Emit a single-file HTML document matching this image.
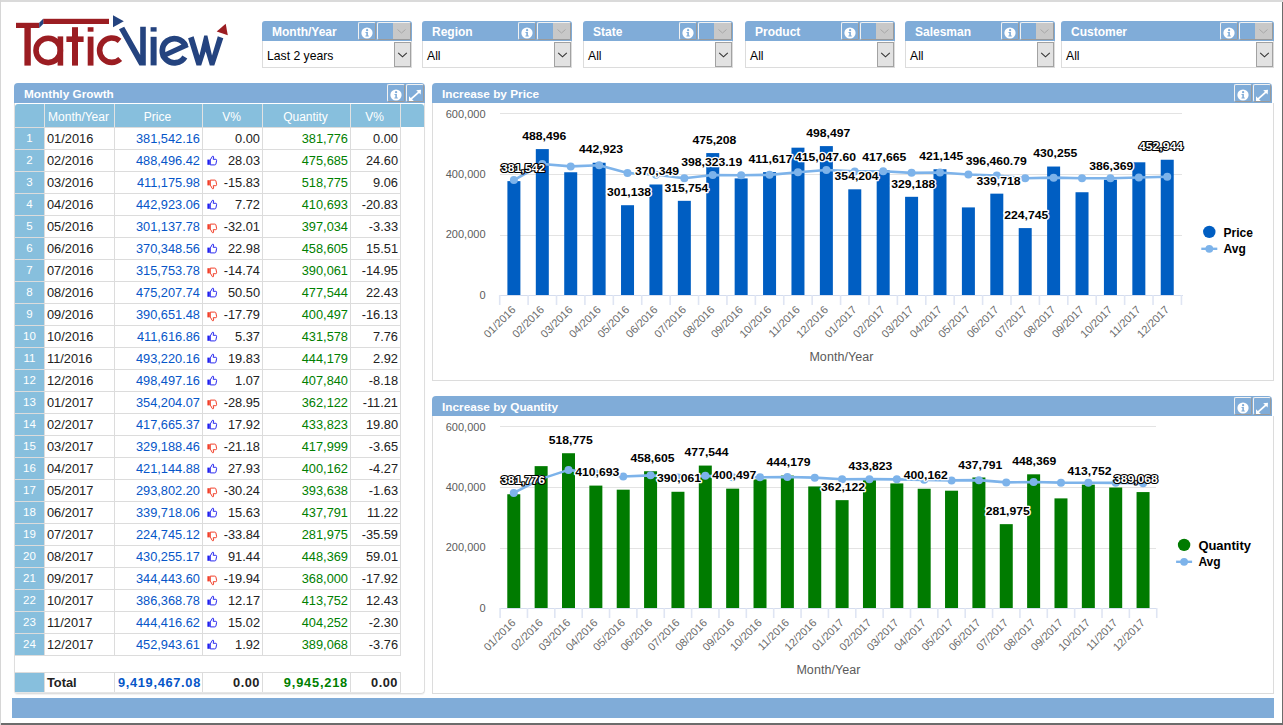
<!DOCTYPE html><html><head><meta charset="utf-8"><style>
*{box-sizing:border-box}
html,body{margin:0;padding:0}
body{width:1283px;height:725px;overflow:hidden;position:relative;background:#fff;font-family:"Liberation Sans", sans-serif;}
.abs{position:absolute}
.frame{position:absolute;left:0;top:0;width:1283px;height:725px;border-top:2px solid #dadada;border-left:1px solid #dadada;border-right:1px solid #6f6f6f;border-bottom:2px solid #6f6f6f;pointer-events:none;z-index:50}
.flt{position:absolute;top:21px;height:47px}
.flt .h{position:absolute;left:0;top:0;right:0;height:20px;background:#80acd8;border-radius:3px 3px 0 0}
.flt .h span{position:absolute;left:10px;top:4px;font-size:12px;font-weight:bold;color:#fff;line-height:14px}
.flt .b{position:absolute;left:0;top:20px;right:0;height:27px;background:#fff;border:1px solid #dcdcdc;border-top:none}
.flt .b span{position:absolute;left:4px;top:8px;font-size:12.2px;color:#000;line-height:15px}
.ddb{position:absolute;width:17px;height:25px;right:0px;top:1px;background:#e1e1e1;border:1px solid #a0a0a0}
.ibtn{position:absolute;width:18px;height:18px;border:1px solid #f2f2f2;border-right-color:#9a9a9a;border-bottom-color:#9a9a9a;border-radius:2px;background:#80acd8}
.pnl{position:absolute;background:#fff}
.ph{position:absolute;left:0;top:0;right:0;height:20px;background:#80acd8;border-radius:4px 4px 0 0}
.ph span{position:absolute;left:10px;top:4px;font-size:11.8px;font-weight:bold;color:#fff;line-height:14px}
</style></head><body>
<div class="abs" style="left:0;top:0;width:1283px;height:2px;background:#dadada;z-index:50"></div><div class="abs" style="left:0;top:0;width:1px;height:725px;background:#d6d6d6;z-index:50"></div><div class="abs" style="left:1282px;top:2px;width:1px;height:723px;background:#6c6c6c;z-index:50"></div><div class="abs" style="left:1px;top:723px;width:1282px;height:2px;background:#6c6c6c;z-index:50"></div>
<svg class="abs" style="left:0;top:0" width="240" height="80" viewBox="0 0 240 80">
<g fill="#9b1d22">
<rect x="16" y="22.8" width="23.2" height="5.2"/>
<rect x="43.2" y="18.8" width="65.8" height="5.2"/>
<rect x="24.4" y="27" width="6.4" height="38.6"/>
<rect x="57.6" y="36.4" width="5.6" height="29.2"/>
<rect x="72" y="27.2" width="6" height="38.4"/>
<rect x="66.4" y="36.4" width="17.2" height="5.6"/>
<rect x="87.7" y="27.2" width="5.8" height="4.5"/>
<rect x="87.7" y="36.6" width="5.8" height="29"/>
</g>
<circle cx="48.2" cy="50.4" r="12.2" fill="none" stroke="#9b1d22" stroke-width="5.6"/>
<path d="M119.6 40.8 A12.2 12.2 0 1 0 120.2 59" fill="none" stroke="#9b1d22" stroke-width="5.6"/>
<path d="M39.2 22.8 L43.2 18.8 L43.2 24 L39.2 28 Z" fill="#24437f"/>
<path d="M113 15.2 L123.8 21.2 L113 27.2 Z" fill="#24437f"/>
<path d="M216.7 31.4 L225.7 23.8 L227.8 35.2 Z" fill="#9b1d22"/>
<g fill="#24437f">
<path d="M119 29.2 L124.2 26.8 L140.2 55 L140.2 26.8 L145.8 26.8 L145.8 65.4 L139.4 65.4 Z"/>
<rect x="150.6" y="27.2" width="6" height="4.4"/>
<rect x="150.6" y="36.8" width="6" height="28.6"/>
<path d="M188.1 38.3 L193.6 36.3 L199.4 55.5 L204.2 35.5 L207.4 35.5 L212 55.5 L217.8 36.3 L223.3 38.3 L214.3 65.5 L209.8 65.5 L205.7 51.5 L201.2 65.5 L196.5 65.5 Z"/>
</g>
<path d="M185.4 45.7 A12.1 12.1 0 1 0 184.8 56.9" fill="none" stroke="#24437f" stroke-width="5.8"/>
<path d="M165 55 L187.6 44.6" fill="none" stroke="#24437f" stroke-width="5.2"/>
</svg>
<div class="flt" style="left:262px;width:150px"><div class="h"><span>Month/Year</span></div><div class="b"><span>Last 2 years</span></div></div><div class="ibtn" style="left:358px;top:22px"></div><svg class="abs" style="left:359.5px;top:26.3px" width="14" height="14" viewBox="0 0 14 14"><circle cx="7" cy="7" r="5.6" fill="#fff"/><circle cx="7.1" cy="4.2" r="1.15" fill="#80acd8"/><path d="M5.5 6.1 H7.9 V9.6 H8.8 V10.6 H5.4 V9.6 H6.3 V7.1 H5.5 Z" fill="#80acd8"/></svg><div class="abs" style="left:377px;top:22px;width:34px;height:18px;border:1px solid #f2f2f2;border-right-color:#9a9a9a;border-bottom-color:#9a9a9a;border-radius:2px;background:#80acd8"></div><div class="abs" style="left:393px;top:23px;width:17px;height:16px;background:#c8c8c8"></div><svg class="abs" style="left:393px;top:23px" width="17" height="16"><path d="M4.5 6.5 L8.5 10 L12.5 6.5" fill="none" stroke="#a8a8a8" stroke-width="1"/></svg><div class="abs" style="left:394px;top:42px;width:17px;height:25px;background:#e2e2e2;border:1px solid #a2a2a2"></div><svg class="abs" style="left:394px;top:42px" width="17" height="25"><path d="M4.2 10.8 L8.5 14.8 L12.8 10.8" fill="none" stroke="#333" stroke-width="1.1"/></svg><div class="flt" style="left:422px;width:150px"><div class="h"><span>Region</span></div><div class="b"><span>All</span></div></div><div class="ibtn" style="left:518px;top:22px"></div><svg class="abs" style="left:519.5px;top:26.3px" width="14" height="14" viewBox="0 0 14 14"><circle cx="7" cy="7" r="5.6" fill="#fff"/><circle cx="7.1" cy="4.2" r="1.15" fill="#80acd8"/><path d="M5.5 6.1 H7.9 V9.6 H8.8 V10.6 H5.4 V9.6 H6.3 V7.1 H5.5 Z" fill="#80acd8"/></svg><div class="abs" style="left:537px;top:22px;width:34px;height:18px;border:1px solid #f2f2f2;border-right-color:#9a9a9a;border-bottom-color:#9a9a9a;border-radius:2px;background:#80acd8"></div><div class="abs" style="left:553px;top:23px;width:17px;height:16px;background:#c8c8c8"></div><svg class="abs" style="left:553px;top:23px" width="17" height="16"><path d="M4.5 6.5 L8.5 10 L12.5 6.5" fill="none" stroke="#a8a8a8" stroke-width="1"/></svg><div class="abs" style="left:554px;top:42px;width:17px;height:25px;background:#e2e2e2;border:1px solid #a2a2a2"></div><svg class="abs" style="left:554px;top:42px" width="17" height="25"><path d="M4.2 10.8 L8.5 14.8 L12.8 10.8" fill="none" stroke="#333" stroke-width="1.1"/></svg><div class="flt" style="left:583px;width:150px"><div class="h"><span>State</span></div><div class="b"><span>All</span></div></div><div class="ibtn" style="left:679px;top:22px"></div><svg class="abs" style="left:680.5px;top:26.3px" width="14" height="14" viewBox="0 0 14 14"><circle cx="7" cy="7" r="5.6" fill="#fff"/><circle cx="7.1" cy="4.2" r="1.15" fill="#80acd8"/><path d="M5.5 6.1 H7.9 V9.6 H8.8 V10.6 H5.4 V9.6 H6.3 V7.1 H5.5 Z" fill="#80acd8"/></svg><div class="abs" style="left:698px;top:22px;width:34px;height:18px;border:1px solid #f2f2f2;border-right-color:#9a9a9a;border-bottom-color:#9a9a9a;border-radius:2px;background:#80acd8"></div><div class="abs" style="left:714px;top:23px;width:17px;height:16px;background:#c8c8c8"></div><svg class="abs" style="left:714px;top:23px" width="17" height="16"><path d="M4.5 6.5 L8.5 10 L12.5 6.5" fill="none" stroke="#a8a8a8" stroke-width="1"/></svg><div class="abs" style="left:715px;top:42px;width:17px;height:25px;background:#e2e2e2;border:1px solid #a2a2a2"></div><svg class="abs" style="left:715px;top:42px" width="17" height="25"><path d="M4.2 10.8 L8.5 14.8 L12.8 10.8" fill="none" stroke="#333" stroke-width="1.1"/></svg><div class="flt" style="left:745px;width:150px"><div class="h"><span>Product</span></div><div class="b"><span>All</span></div></div><div class="ibtn" style="left:841px;top:22px"></div><svg class="abs" style="left:842.5px;top:26.3px" width="14" height="14" viewBox="0 0 14 14"><circle cx="7" cy="7" r="5.6" fill="#fff"/><circle cx="7.1" cy="4.2" r="1.15" fill="#80acd8"/><path d="M5.5 6.1 H7.9 V9.6 H8.8 V10.6 H5.4 V9.6 H6.3 V7.1 H5.5 Z" fill="#80acd8"/></svg><div class="abs" style="left:860px;top:22px;width:34px;height:18px;border:1px solid #f2f2f2;border-right-color:#9a9a9a;border-bottom-color:#9a9a9a;border-radius:2px;background:#80acd8"></div><div class="abs" style="left:876px;top:23px;width:17px;height:16px;background:#c8c8c8"></div><svg class="abs" style="left:876px;top:23px" width="17" height="16"><path d="M4.5 6.5 L8.5 10 L12.5 6.5" fill="none" stroke="#a8a8a8" stroke-width="1"/></svg><div class="abs" style="left:877px;top:42px;width:17px;height:25px;background:#e2e2e2;border:1px solid #a2a2a2"></div><svg class="abs" style="left:877px;top:42px" width="17" height="25"><path d="M4.2 10.8 L8.5 14.8 L12.8 10.8" fill="none" stroke="#333" stroke-width="1.1"/></svg><div class="flt" style="left:905px;width:150px"><div class="h"><span>Salesman</span></div><div class="b"><span>All</span></div></div><div class="ibtn" style="left:1001px;top:22px"></div><svg class="abs" style="left:1002.5px;top:26.3px" width="14" height="14" viewBox="0 0 14 14"><circle cx="7" cy="7" r="5.6" fill="#fff"/><circle cx="7.1" cy="4.2" r="1.15" fill="#80acd8"/><path d="M5.5 6.1 H7.9 V9.6 H8.8 V10.6 H5.4 V9.6 H6.3 V7.1 H5.5 Z" fill="#80acd8"/></svg><div class="abs" style="left:1020px;top:22px;width:34px;height:18px;border:1px solid #f2f2f2;border-right-color:#9a9a9a;border-bottom-color:#9a9a9a;border-radius:2px;background:#80acd8"></div><div class="abs" style="left:1036px;top:23px;width:17px;height:16px;background:#c8c8c8"></div><svg class="abs" style="left:1036px;top:23px" width="17" height="16"><path d="M4.5 6.5 L8.5 10 L12.5 6.5" fill="none" stroke="#a8a8a8" stroke-width="1"/></svg><div class="abs" style="left:1037px;top:42px;width:17px;height:25px;background:#e2e2e2;border:1px solid #a2a2a2"></div><svg class="abs" style="left:1037px;top:42px" width="17" height="25"><path d="M4.2 10.8 L8.5 14.8 L12.8 10.8" fill="none" stroke="#333" stroke-width="1.1"/></svg><div class="flt" style="left:1061px;width:213px"><div class="h"><span>Customer</span></div><div class="b"><span>All</span></div></div><div class="ibtn" style="left:1220px;top:22px"></div><svg class="abs" style="left:1221.5px;top:26.3px" width="14" height="14" viewBox="0 0 14 14"><circle cx="7" cy="7" r="5.6" fill="#fff"/><circle cx="7.1" cy="4.2" r="1.15" fill="#80acd8"/><path d="M5.5 6.1 H7.9 V9.6 H8.8 V10.6 H5.4 V9.6 H6.3 V7.1 H5.5 Z" fill="#80acd8"/></svg><div class="abs" style="left:1239px;top:22px;width:34px;height:18px;border:1px solid #f2f2f2;border-right-color:#9a9a9a;border-bottom-color:#9a9a9a;border-radius:2px;background:#80acd8"></div><div class="abs" style="left:1255px;top:23px;width:17px;height:16px;background:#c8c8c8"></div><svg class="abs" style="left:1255px;top:23px" width="17" height="16"><path d="M4.5 6.5 L8.5 10 L12.5 6.5" fill="none" stroke="#a8a8a8" stroke-width="1"/></svg><div class="abs" style="left:1256px;top:42px;width:17px;height:25px;background:#e2e2e2;border:1px solid #a2a2a2"></div><svg class="abs" style="left:1256px;top:42px" width="17" height="25"><path d="M4.2 10.8 L8.5 14.8 L12.8 10.8" fill="none" stroke="#333" stroke-width="1.1"/></svg><div class="abs" style="left:14px;top:103px;width:411px;height:591px;border:1px solid #dedede;border-top:none;border-radius:0 0 4px 4px;box-shadow:0 1px 1px rgba(0,0,0,0.06)"></div><div class="ph abs" style="left:14px;top:83px;width:411px;right:auto"><span>Monthly Growth</span></div><div class="ibtn" style="left:387px;top:84px"></div><svg class="abs" style="left:388.6px;top:88.4px" width="14" height="14" viewBox="0 0 14 14"><circle cx="7" cy="7" r="5.6" fill="#fff"/><circle cx="7.1" cy="4.2" r="1.15" fill="#80acd8"/><path d="M5.5 6.1 H7.9 V9.6 H8.8 V10.6 H5.4 V9.6 H6.3 V7.1 H5.5 Z" fill="#80acd8"/></svg><div class="ibtn" style="left:406px;top:84px"></div><svg class="abs" style="left:406px;top:84px" width="18" height="18" viewBox="0 0 18 18"><path d="M4.6 15.4 L13.4 7.6" stroke="#fff" stroke-width="1.8"/><path d="M10.2 6.2 L15 5.8 L14.6 10.6 Z" fill="#fff"/><path d="M3 12.2 L3 17 L7.8 17 Z" fill="#fff"/></svg><div class="abs" style="left:15px;top:104px;width:409px;height:23px;background:#87bfdd;border-radius:3px 3px 0 0"></div><div class="abs" style="left:15px;top:127px;width:30px;height:528px;background:#87bfdd"></div><div class="abs" style="left:15px;top:673px;width:30px;height:19px;background:#87bfdd"></div><div class="abs" style="left:44px;top:104px;width:1px;height:551px;background:#dcdcdc"></div><div class="abs" style="left:44px;top:672px;width:1px;height:20px;background:#dcdcdc"></div><div class="abs" style="left:114px;top:104px;width:1px;height:551px;background:#dcdcdc"></div><div class="abs" style="left:114px;top:672px;width:1px;height:20px;background:#dcdcdc"></div><div class="abs" style="left:202px;top:104px;width:1px;height:551px;background:#dcdcdc"></div><div class="abs" style="left:202px;top:672px;width:1px;height:20px;background:#dcdcdc"></div><div class="abs" style="left:262px;top:104px;width:1px;height:551px;background:#dcdcdc"></div><div class="abs" style="left:262px;top:672px;width:1px;height:20px;background:#dcdcdc"></div><div class="abs" style="left:350px;top:104px;width:1px;height:551px;background:#dcdcdc"></div><div class="abs" style="left:350px;top:672px;width:1px;height:20px;background:#dcdcdc"></div><div class="abs" style="left:400px;top:104px;width:1px;height:551px;background:#dcdcdc"></div><div class="abs" style="left:400px;top:672px;width:1px;height:20px;background:#dcdcdc"></div><div class="abs" style="left:44px;top:104px;width:1px;height:23px;background:#e2e2e2"></div><div class="abs" style="left:114px;top:104px;width:1px;height:23px;background:#e2e2e2"></div><div class="abs" style="left:202px;top:104px;width:1px;height:23px;background:#e2e2e2"></div><div class="abs" style="left:262px;top:104px;width:1px;height:23px;background:#e2e2e2"></div><div class="abs" style="left:350px;top:104px;width:1px;height:23px;background:#e2e2e2"></div><div class="abs" style="left:400px;top:104px;width:1px;height:23px;background:#e2e2e2"></div><div class="abs" style="left:15px;top:127px;width:386px;height:1px;background:#dcdcdc"></div><div class="abs" style="left:15px;top:149px;width:386px;height:1px;background:#dcdcdc"></div><div class="abs" style="left:15px;top:171px;width:386px;height:1px;background:#dcdcdc"></div><div class="abs" style="left:15px;top:193px;width:386px;height:1px;background:#dcdcdc"></div><div class="abs" style="left:15px;top:215px;width:386px;height:1px;background:#dcdcdc"></div><div class="abs" style="left:15px;top:237px;width:386px;height:1px;background:#dcdcdc"></div><div class="abs" style="left:15px;top:259px;width:386px;height:1px;background:#dcdcdc"></div><div class="abs" style="left:15px;top:281px;width:386px;height:1px;background:#dcdcdc"></div><div class="abs" style="left:15px;top:303px;width:386px;height:1px;background:#dcdcdc"></div><div class="abs" style="left:15px;top:325px;width:386px;height:1px;background:#dcdcdc"></div><div class="abs" style="left:15px;top:347px;width:386px;height:1px;background:#dcdcdc"></div><div class="abs" style="left:15px;top:369px;width:386px;height:1px;background:#dcdcdc"></div><div class="abs" style="left:15px;top:391px;width:386px;height:1px;background:#dcdcdc"></div><div class="abs" style="left:15px;top:413px;width:386px;height:1px;background:#dcdcdc"></div><div class="abs" style="left:15px;top:435px;width:386px;height:1px;background:#dcdcdc"></div><div class="abs" style="left:15px;top:457px;width:386px;height:1px;background:#dcdcdc"></div><div class="abs" style="left:15px;top:479px;width:386px;height:1px;background:#dcdcdc"></div><div class="abs" style="left:15px;top:501px;width:386px;height:1px;background:#dcdcdc"></div><div class="abs" style="left:15px;top:523px;width:386px;height:1px;background:#dcdcdc"></div><div class="abs" style="left:15px;top:545px;width:386px;height:1px;background:#dcdcdc"></div><div class="abs" style="left:15px;top:567px;width:386px;height:1px;background:#dcdcdc"></div><div class="abs" style="left:15px;top:589px;width:386px;height:1px;background:#dcdcdc"></div><div class="abs" style="left:15px;top:611px;width:386px;height:1px;background:#dcdcdc"></div><div class="abs" style="left:15px;top:633px;width:386px;height:1px;background:#dcdcdc"></div><div class="abs" style="left:15px;top:655px;width:386px;height:1px;background:#dcdcdc"></div><div class="abs" style="left:15px;top:672px;width:386px;height:1px;background:#dcdcdc"></div><div class="abs" style="left:15px;top:692px;width:386px;height:1px;background:#e6e6e6"></div><div class="abs" style="left:44px;top:104.6px;width:69px;height:23px;line-height:25px;text-align:center;color:#fff;font-size:12px">Month/Year</div><div class="abs" style="left:114px;top:104.6px;width:87px;height:23px;line-height:25px;text-align:center;color:#fff;font-size:12px">Price</div><div class="abs" style="left:202px;top:104.6px;width:59px;height:23px;line-height:25px;text-align:center;color:#fff;font-size:12px">V%</div><div class="abs" style="left:262px;top:104.6px;width:87px;height:23px;line-height:25px;text-align:center;color:#fff;font-size:12px">Quantity</div><div class="abs" style="left:350px;top:104.6px;width:49px;height:23px;line-height:25px;text-align:center;color:#fff;font-size:12px">V%</div><div style="position:absolute;top:127px;height:21px;line-height:23px;font-size:12.8px;white-space:nowrap;left:15px;width:29px;text-align:center;color:#fff;font-size:11.5px">1</div><div style="position:absolute;top:127px;height:21px;line-height:23px;font-size:12.8px;white-space:nowrap;left:47px;color:#222">01/2016</div><div style="position:absolute;top:127px;height:21px;line-height:23px;font-size:12.8px;white-space:nowrap;right:1083px;color:#0656c8;text-align:right">381,542.16</div><div style="position:absolute;top:127px;height:21px;line-height:23px;font-size:12.8px;white-space:nowrap;right:1023px;color:#222;text-align:right">0.00</div><div style="position:absolute;top:127px;height:21px;line-height:23px;font-size:12.8px;white-space:nowrap;right:935px;color:#008000;text-align:right">381,776</div><div style="position:absolute;top:127px;height:21px;line-height:23px;font-size:12.8px;white-space:nowrap;right:885px;color:#222;text-align:right">0.00</div><div style="position:absolute;top:149px;height:21px;line-height:23px;font-size:12.8px;white-space:nowrap;left:15px;width:29px;text-align:center;color:#fff;font-size:11.5px">2</div><div style="position:absolute;top:149px;height:21px;line-height:23px;font-size:12.8px;white-space:nowrap;left:47px;color:#222">02/2016</div><div style="position:absolute;top:149px;height:21px;line-height:23px;font-size:12.8px;white-space:nowrap;right:1083px;color:#0656c8;text-align:right">488,496.42</div><div style="position:absolute;top:149px;height:21px;line-height:23px;font-size:12.8px;white-space:nowrap;right:1023px;color:#222;text-align:right">28.03</div><div style="position:absolute;top:149px;height:21px;line-height:23px;font-size:12.8px;white-space:nowrap;right:935px;color:#008000;text-align:right">475,685</div><div style="position:absolute;top:149px;height:21px;line-height:23px;font-size:12.8px;white-space:nowrap;right:885px;color:#222;text-align:right">24.60</div><svg class="abs" style="left:207px;top:155.2px" width="11" height="11" viewBox="0 0 11 11"><rect x="0.4" y="4.6" width="2.4" height="5.2" fill="#2020f0"/><path d="M3.3 4.9 L5.4 1.3 Q6.5 0.9 6.7 2 L6.2 4.3 L8.9 4.3 Q9.8 4.5 9.6 5.6 L8.9 9.1 Q8.6 9.9 7.8 9.9 L3.3 9.9 Z" fill="none" stroke="#2a2af0" stroke-width="1"/></svg><div style="position:absolute;top:171px;height:21px;line-height:23px;font-size:12.8px;white-space:nowrap;left:15px;width:29px;text-align:center;color:#fff;font-size:11.5px">3</div><div style="position:absolute;top:171px;height:21px;line-height:23px;font-size:12.8px;white-space:nowrap;left:47px;color:#222">03/2016</div><div style="position:absolute;top:171px;height:21px;line-height:23px;font-size:12.8px;white-space:nowrap;right:1083px;color:#0656c8;text-align:right">411,175.98</div><div style="position:absolute;top:171px;height:21px;line-height:23px;font-size:12.8px;white-space:nowrap;right:1023px;color:#222;text-align:right">-15.83</div><div style="position:absolute;top:171px;height:21px;line-height:23px;font-size:12.8px;white-space:nowrap;right:935px;color:#008000;text-align:right">518,775</div><div style="position:absolute;top:171px;height:21px;line-height:23px;font-size:12.8px;white-space:nowrap;right:885px;color:#222;text-align:right">9.06</div><svg class="abs" style="left:207px;top:178.6px" width="11" height="11" viewBox="0 0 11 11"><rect x="0.4" y="1.2" width="2.4" height="5.2" fill="#f2402a"/><path d="M3.3 6.1 L5.4 9.7 Q6.5 10.1 6.7 9 L6.2 6.7 L8.9 6.7 Q9.8 6.5 9.6 5.4 L8.9 1.9 Q8.6 1.1 7.8 1.1 L3.3 1.1 Z" fill="none" stroke="#f2402a" stroke-width="1"/></svg><div style="position:absolute;top:193px;height:21px;line-height:23px;font-size:12.8px;white-space:nowrap;left:15px;width:29px;text-align:center;color:#fff;font-size:11.5px">4</div><div style="position:absolute;top:193px;height:21px;line-height:23px;font-size:12.8px;white-space:nowrap;left:47px;color:#222">04/2016</div><div style="position:absolute;top:193px;height:21px;line-height:23px;font-size:12.8px;white-space:nowrap;right:1083px;color:#0656c8;text-align:right">442,923.06</div><div style="position:absolute;top:193px;height:21px;line-height:23px;font-size:12.8px;white-space:nowrap;right:1023px;color:#222;text-align:right">7.72</div><div style="position:absolute;top:193px;height:21px;line-height:23px;font-size:12.8px;white-space:nowrap;right:935px;color:#008000;text-align:right">410,693</div><div style="position:absolute;top:193px;height:21px;line-height:23px;font-size:12.8px;white-space:nowrap;right:885px;color:#222;text-align:right">-20.83</div><svg class="abs" style="left:207px;top:199.2px" width="11" height="11" viewBox="0 0 11 11"><rect x="0.4" y="4.6" width="2.4" height="5.2" fill="#2020f0"/><path d="M3.3 4.9 L5.4 1.3 Q6.5 0.9 6.7 2 L6.2 4.3 L8.9 4.3 Q9.8 4.5 9.6 5.6 L8.9 9.1 Q8.6 9.9 7.8 9.9 L3.3 9.9 Z" fill="none" stroke="#2a2af0" stroke-width="1"/></svg><div style="position:absolute;top:215px;height:21px;line-height:23px;font-size:12.8px;white-space:nowrap;left:15px;width:29px;text-align:center;color:#fff;font-size:11.5px">5</div><div style="position:absolute;top:215px;height:21px;line-height:23px;font-size:12.8px;white-space:nowrap;left:47px;color:#222">05/2016</div><div style="position:absolute;top:215px;height:21px;line-height:23px;font-size:12.8px;white-space:nowrap;right:1083px;color:#0656c8;text-align:right">301,137.78</div><div style="position:absolute;top:215px;height:21px;line-height:23px;font-size:12.8px;white-space:nowrap;right:1023px;color:#222;text-align:right">-32.01</div><div style="position:absolute;top:215px;height:21px;line-height:23px;font-size:12.8px;white-space:nowrap;right:935px;color:#008000;text-align:right">397,034</div><div style="position:absolute;top:215px;height:21px;line-height:23px;font-size:12.8px;white-space:nowrap;right:885px;color:#222;text-align:right">-3.33</div><svg class="abs" style="left:207px;top:222.6px" width="11" height="11" viewBox="0 0 11 11"><rect x="0.4" y="1.2" width="2.4" height="5.2" fill="#f2402a"/><path d="M3.3 6.1 L5.4 9.7 Q6.5 10.1 6.7 9 L6.2 6.7 L8.9 6.7 Q9.8 6.5 9.6 5.4 L8.9 1.9 Q8.6 1.1 7.8 1.1 L3.3 1.1 Z" fill="none" stroke="#f2402a" stroke-width="1"/></svg><div style="position:absolute;top:237px;height:21px;line-height:23px;font-size:12.8px;white-space:nowrap;left:15px;width:29px;text-align:center;color:#fff;font-size:11.5px">6</div><div style="position:absolute;top:237px;height:21px;line-height:23px;font-size:12.8px;white-space:nowrap;left:47px;color:#222">06/2016</div><div style="position:absolute;top:237px;height:21px;line-height:23px;font-size:12.8px;white-space:nowrap;right:1083px;color:#0656c8;text-align:right">370,348.56</div><div style="position:absolute;top:237px;height:21px;line-height:23px;font-size:12.8px;white-space:nowrap;right:1023px;color:#222;text-align:right">22.98</div><div style="position:absolute;top:237px;height:21px;line-height:23px;font-size:12.8px;white-space:nowrap;right:935px;color:#008000;text-align:right">458,605</div><div style="position:absolute;top:237px;height:21px;line-height:23px;font-size:12.8px;white-space:nowrap;right:885px;color:#222;text-align:right">15.51</div><svg class="abs" style="left:207px;top:243.2px" width="11" height="11" viewBox="0 0 11 11"><rect x="0.4" y="4.6" width="2.4" height="5.2" fill="#2020f0"/><path d="M3.3 4.9 L5.4 1.3 Q6.5 0.9 6.7 2 L6.2 4.3 L8.9 4.3 Q9.8 4.5 9.6 5.6 L8.9 9.1 Q8.6 9.9 7.8 9.9 L3.3 9.9 Z" fill="none" stroke="#2a2af0" stroke-width="1"/></svg><div style="position:absolute;top:259px;height:21px;line-height:23px;font-size:12.8px;white-space:nowrap;left:15px;width:29px;text-align:center;color:#fff;font-size:11.5px">7</div><div style="position:absolute;top:259px;height:21px;line-height:23px;font-size:12.8px;white-space:nowrap;left:47px;color:#222">07/2016</div><div style="position:absolute;top:259px;height:21px;line-height:23px;font-size:12.8px;white-space:nowrap;right:1083px;color:#0656c8;text-align:right">315,753.78</div><div style="position:absolute;top:259px;height:21px;line-height:23px;font-size:12.8px;white-space:nowrap;right:1023px;color:#222;text-align:right">-14.74</div><div style="position:absolute;top:259px;height:21px;line-height:23px;font-size:12.8px;white-space:nowrap;right:935px;color:#008000;text-align:right">390,061</div><div style="position:absolute;top:259px;height:21px;line-height:23px;font-size:12.8px;white-space:nowrap;right:885px;color:#222;text-align:right">-14.95</div><svg class="abs" style="left:207px;top:266.6px" width="11" height="11" viewBox="0 0 11 11"><rect x="0.4" y="1.2" width="2.4" height="5.2" fill="#f2402a"/><path d="M3.3 6.1 L5.4 9.7 Q6.5 10.1 6.7 9 L6.2 6.7 L8.9 6.7 Q9.8 6.5 9.6 5.4 L8.9 1.9 Q8.6 1.1 7.8 1.1 L3.3 1.1 Z" fill="none" stroke="#f2402a" stroke-width="1"/></svg><div style="position:absolute;top:281px;height:21px;line-height:23px;font-size:12.8px;white-space:nowrap;left:15px;width:29px;text-align:center;color:#fff;font-size:11.5px">8</div><div style="position:absolute;top:281px;height:21px;line-height:23px;font-size:12.8px;white-space:nowrap;left:47px;color:#222">08/2016</div><div style="position:absolute;top:281px;height:21px;line-height:23px;font-size:12.8px;white-space:nowrap;right:1083px;color:#0656c8;text-align:right">475,207.74</div><div style="position:absolute;top:281px;height:21px;line-height:23px;font-size:12.8px;white-space:nowrap;right:1023px;color:#222;text-align:right">50.50</div><div style="position:absolute;top:281px;height:21px;line-height:23px;font-size:12.8px;white-space:nowrap;right:935px;color:#008000;text-align:right">477,544</div><div style="position:absolute;top:281px;height:21px;line-height:23px;font-size:12.8px;white-space:nowrap;right:885px;color:#222;text-align:right">22.43</div><svg class="abs" style="left:207px;top:287.2px" width="11" height="11" viewBox="0 0 11 11"><rect x="0.4" y="4.6" width="2.4" height="5.2" fill="#2020f0"/><path d="M3.3 4.9 L5.4 1.3 Q6.5 0.9 6.7 2 L6.2 4.3 L8.9 4.3 Q9.8 4.5 9.6 5.6 L8.9 9.1 Q8.6 9.9 7.8 9.9 L3.3 9.9 Z" fill="none" stroke="#2a2af0" stroke-width="1"/></svg><div style="position:absolute;top:303px;height:21px;line-height:23px;font-size:12.8px;white-space:nowrap;left:15px;width:29px;text-align:center;color:#fff;font-size:11.5px">9</div><div style="position:absolute;top:303px;height:21px;line-height:23px;font-size:12.8px;white-space:nowrap;left:47px;color:#222">09/2016</div><div style="position:absolute;top:303px;height:21px;line-height:23px;font-size:12.8px;white-space:nowrap;right:1083px;color:#0656c8;text-align:right">390,651.48</div><div style="position:absolute;top:303px;height:21px;line-height:23px;font-size:12.8px;white-space:nowrap;right:1023px;color:#222;text-align:right">-17.79</div><div style="position:absolute;top:303px;height:21px;line-height:23px;font-size:12.8px;white-space:nowrap;right:935px;color:#008000;text-align:right">400,497</div><div style="position:absolute;top:303px;height:21px;line-height:23px;font-size:12.8px;white-space:nowrap;right:885px;color:#222;text-align:right">-16.13</div><svg class="abs" style="left:207px;top:310.6px" width="11" height="11" viewBox="0 0 11 11"><rect x="0.4" y="1.2" width="2.4" height="5.2" fill="#f2402a"/><path d="M3.3 6.1 L5.4 9.7 Q6.5 10.1 6.7 9 L6.2 6.7 L8.9 6.7 Q9.8 6.5 9.6 5.4 L8.9 1.9 Q8.6 1.1 7.8 1.1 L3.3 1.1 Z" fill="none" stroke="#f2402a" stroke-width="1"/></svg><div style="position:absolute;top:325px;height:21px;line-height:23px;font-size:12.8px;white-space:nowrap;left:15px;width:29px;text-align:center;color:#fff;font-size:11.5px">10</div><div style="position:absolute;top:325px;height:21px;line-height:23px;font-size:12.8px;white-space:nowrap;left:47px;color:#222">10/2016</div><div style="position:absolute;top:325px;height:21px;line-height:23px;font-size:12.8px;white-space:nowrap;right:1083px;color:#0656c8;text-align:right">411,616.86</div><div style="position:absolute;top:325px;height:21px;line-height:23px;font-size:12.8px;white-space:nowrap;right:1023px;color:#222;text-align:right">5.37</div><div style="position:absolute;top:325px;height:21px;line-height:23px;font-size:12.8px;white-space:nowrap;right:935px;color:#008000;text-align:right">431,578</div><div style="position:absolute;top:325px;height:21px;line-height:23px;font-size:12.8px;white-space:nowrap;right:885px;color:#222;text-align:right">7.76</div><svg class="abs" style="left:207px;top:331.2px" width="11" height="11" viewBox="0 0 11 11"><rect x="0.4" y="4.6" width="2.4" height="5.2" fill="#2020f0"/><path d="M3.3 4.9 L5.4 1.3 Q6.5 0.9 6.7 2 L6.2 4.3 L8.9 4.3 Q9.8 4.5 9.6 5.6 L8.9 9.1 Q8.6 9.9 7.8 9.9 L3.3 9.9 Z" fill="none" stroke="#2a2af0" stroke-width="1"/></svg><div style="position:absolute;top:347px;height:21px;line-height:23px;font-size:12.8px;white-space:nowrap;left:15px;width:29px;text-align:center;color:#fff;font-size:11.5px">11</div><div style="position:absolute;top:347px;height:21px;line-height:23px;font-size:12.8px;white-space:nowrap;left:47px;color:#222">11/2016</div><div style="position:absolute;top:347px;height:21px;line-height:23px;font-size:12.8px;white-space:nowrap;right:1083px;color:#0656c8;text-align:right">493,220.16</div><div style="position:absolute;top:347px;height:21px;line-height:23px;font-size:12.8px;white-space:nowrap;right:1023px;color:#222;text-align:right">19.83</div><div style="position:absolute;top:347px;height:21px;line-height:23px;font-size:12.8px;white-space:nowrap;right:935px;color:#008000;text-align:right">444,179</div><div style="position:absolute;top:347px;height:21px;line-height:23px;font-size:12.8px;white-space:nowrap;right:885px;color:#222;text-align:right">2.92</div><svg class="abs" style="left:207px;top:353.2px" width="11" height="11" viewBox="0 0 11 11"><rect x="0.4" y="4.6" width="2.4" height="5.2" fill="#2020f0"/><path d="M3.3 4.9 L5.4 1.3 Q6.5 0.9 6.7 2 L6.2 4.3 L8.9 4.3 Q9.8 4.5 9.6 5.6 L8.9 9.1 Q8.6 9.9 7.8 9.9 L3.3 9.9 Z" fill="none" stroke="#2a2af0" stroke-width="1"/></svg><div style="position:absolute;top:369px;height:21px;line-height:23px;font-size:12.8px;white-space:nowrap;left:15px;width:29px;text-align:center;color:#fff;font-size:11.5px">12</div><div style="position:absolute;top:369px;height:21px;line-height:23px;font-size:12.8px;white-space:nowrap;left:47px;color:#222">12/2016</div><div style="position:absolute;top:369px;height:21px;line-height:23px;font-size:12.8px;white-space:nowrap;right:1083px;color:#0656c8;text-align:right">498,497.16</div><div style="position:absolute;top:369px;height:21px;line-height:23px;font-size:12.8px;white-space:nowrap;right:1023px;color:#222;text-align:right">1.07</div><div style="position:absolute;top:369px;height:21px;line-height:23px;font-size:12.8px;white-space:nowrap;right:935px;color:#008000;text-align:right">407,840</div><div style="position:absolute;top:369px;height:21px;line-height:23px;font-size:12.8px;white-space:nowrap;right:885px;color:#222;text-align:right">-8.18</div><svg class="abs" style="left:207px;top:375.2px" width="11" height="11" viewBox="0 0 11 11"><rect x="0.4" y="4.6" width="2.4" height="5.2" fill="#2020f0"/><path d="M3.3 4.9 L5.4 1.3 Q6.5 0.9 6.7 2 L6.2 4.3 L8.9 4.3 Q9.8 4.5 9.6 5.6 L8.9 9.1 Q8.6 9.9 7.8 9.9 L3.3 9.9 Z" fill="none" stroke="#2a2af0" stroke-width="1"/></svg><div style="position:absolute;top:391px;height:21px;line-height:23px;font-size:12.8px;white-space:nowrap;left:15px;width:29px;text-align:center;color:#fff;font-size:11.5px">13</div><div style="position:absolute;top:391px;height:21px;line-height:23px;font-size:12.8px;white-space:nowrap;left:47px;color:#222">01/2017</div><div style="position:absolute;top:391px;height:21px;line-height:23px;font-size:12.8px;white-space:nowrap;right:1083px;color:#0656c8;text-align:right">354,204.07</div><div style="position:absolute;top:391px;height:21px;line-height:23px;font-size:12.8px;white-space:nowrap;right:1023px;color:#222;text-align:right">-28.95</div><div style="position:absolute;top:391px;height:21px;line-height:23px;font-size:12.8px;white-space:nowrap;right:935px;color:#008000;text-align:right">362,122</div><div style="position:absolute;top:391px;height:21px;line-height:23px;font-size:12.8px;white-space:nowrap;right:885px;color:#222;text-align:right">-11.21</div><svg class="abs" style="left:207px;top:398.6px" width="11" height="11" viewBox="0 0 11 11"><rect x="0.4" y="1.2" width="2.4" height="5.2" fill="#f2402a"/><path d="M3.3 6.1 L5.4 9.7 Q6.5 10.1 6.7 9 L6.2 6.7 L8.9 6.7 Q9.8 6.5 9.6 5.4 L8.9 1.9 Q8.6 1.1 7.8 1.1 L3.3 1.1 Z" fill="none" stroke="#f2402a" stroke-width="1"/></svg><div style="position:absolute;top:413px;height:21px;line-height:23px;font-size:12.8px;white-space:nowrap;left:15px;width:29px;text-align:center;color:#fff;font-size:11.5px">14</div><div style="position:absolute;top:413px;height:21px;line-height:23px;font-size:12.8px;white-space:nowrap;left:47px;color:#222">02/2017</div><div style="position:absolute;top:413px;height:21px;line-height:23px;font-size:12.8px;white-space:nowrap;right:1083px;color:#0656c8;text-align:right">417,665.37</div><div style="position:absolute;top:413px;height:21px;line-height:23px;font-size:12.8px;white-space:nowrap;right:1023px;color:#222;text-align:right">17.92</div><div style="position:absolute;top:413px;height:21px;line-height:23px;font-size:12.8px;white-space:nowrap;right:935px;color:#008000;text-align:right">433,823</div><div style="position:absolute;top:413px;height:21px;line-height:23px;font-size:12.8px;white-space:nowrap;right:885px;color:#222;text-align:right">19.80</div><svg class="abs" style="left:207px;top:419.2px" width="11" height="11" viewBox="0 0 11 11"><rect x="0.4" y="4.6" width="2.4" height="5.2" fill="#2020f0"/><path d="M3.3 4.9 L5.4 1.3 Q6.5 0.9 6.7 2 L6.2 4.3 L8.9 4.3 Q9.8 4.5 9.6 5.6 L8.9 9.1 Q8.6 9.9 7.8 9.9 L3.3 9.9 Z" fill="none" stroke="#2a2af0" stroke-width="1"/></svg><div style="position:absolute;top:435px;height:21px;line-height:23px;font-size:12.8px;white-space:nowrap;left:15px;width:29px;text-align:center;color:#fff;font-size:11.5px">15</div><div style="position:absolute;top:435px;height:21px;line-height:23px;font-size:12.8px;white-space:nowrap;left:47px;color:#222">03/2017</div><div style="position:absolute;top:435px;height:21px;line-height:23px;font-size:12.8px;white-space:nowrap;right:1083px;color:#0656c8;text-align:right">329,188.46</div><div style="position:absolute;top:435px;height:21px;line-height:23px;font-size:12.8px;white-space:nowrap;right:1023px;color:#222;text-align:right">-21.18</div><div style="position:absolute;top:435px;height:21px;line-height:23px;font-size:12.8px;white-space:nowrap;right:935px;color:#008000;text-align:right">417,999</div><div style="position:absolute;top:435px;height:21px;line-height:23px;font-size:12.8px;white-space:nowrap;right:885px;color:#222;text-align:right">-3.65</div><svg class="abs" style="left:207px;top:442.6px" width="11" height="11" viewBox="0 0 11 11"><rect x="0.4" y="1.2" width="2.4" height="5.2" fill="#f2402a"/><path d="M3.3 6.1 L5.4 9.7 Q6.5 10.1 6.7 9 L6.2 6.7 L8.9 6.7 Q9.8 6.5 9.6 5.4 L8.9 1.9 Q8.6 1.1 7.8 1.1 L3.3 1.1 Z" fill="none" stroke="#f2402a" stroke-width="1"/></svg><div style="position:absolute;top:457px;height:21px;line-height:23px;font-size:12.8px;white-space:nowrap;left:15px;width:29px;text-align:center;color:#fff;font-size:11.5px">16</div><div style="position:absolute;top:457px;height:21px;line-height:23px;font-size:12.8px;white-space:nowrap;left:47px;color:#222">04/2017</div><div style="position:absolute;top:457px;height:21px;line-height:23px;font-size:12.8px;white-space:nowrap;right:1083px;color:#0656c8;text-align:right">421,144.88</div><div style="position:absolute;top:457px;height:21px;line-height:23px;font-size:12.8px;white-space:nowrap;right:1023px;color:#222;text-align:right">27.93</div><div style="position:absolute;top:457px;height:21px;line-height:23px;font-size:12.8px;white-space:nowrap;right:935px;color:#008000;text-align:right">400,162</div><div style="position:absolute;top:457px;height:21px;line-height:23px;font-size:12.8px;white-space:nowrap;right:885px;color:#222;text-align:right">-4.27</div><svg class="abs" style="left:207px;top:463.2px" width="11" height="11" viewBox="0 0 11 11"><rect x="0.4" y="4.6" width="2.4" height="5.2" fill="#2020f0"/><path d="M3.3 4.9 L5.4 1.3 Q6.5 0.9 6.7 2 L6.2 4.3 L8.9 4.3 Q9.8 4.5 9.6 5.6 L8.9 9.1 Q8.6 9.9 7.8 9.9 L3.3 9.9 Z" fill="none" stroke="#2a2af0" stroke-width="1"/></svg><div style="position:absolute;top:479px;height:21px;line-height:23px;font-size:12.8px;white-space:nowrap;left:15px;width:29px;text-align:center;color:#fff;font-size:11.5px">17</div><div style="position:absolute;top:479px;height:21px;line-height:23px;font-size:12.8px;white-space:nowrap;left:47px;color:#222">05/2017</div><div style="position:absolute;top:479px;height:21px;line-height:23px;font-size:12.8px;white-space:nowrap;right:1083px;color:#0656c8;text-align:right">293,802.20</div><div style="position:absolute;top:479px;height:21px;line-height:23px;font-size:12.8px;white-space:nowrap;right:1023px;color:#222;text-align:right">-30.24</div><div style="position:absolute;top:479px;height:21px;line-height:23px;font-size:12.8px;white-space:nowrap;right:935px;color:#008000;text-align:right">393,638</div><div style="position:absolute;top:479px;height:21px;line-height:23px;font-size:12.8px;white-space:nowrap;right:885px;color:#222;text-align:right">-1.63</div><svg class="abs" style="left:207px;top:486.6px" width="11" height="11" viewBox="0 0 11 11"><rect x="0.4" y="1.2" width="2.4" height="5.2" fill="#f2402a"/><path d="M3.3 6.1 L5.4 9.7 Q6.5 10.1 6.7 9 L6.2 6.7 L8.9 6.7 Q9.8 6.5 9.6 5.4 L8.9 1.9 Q8.6 1.1 7.8 1.1 L3.3 1.1 Z" fill="none" stroke="#f2402a" stroke-width="1"/></svg><div style="position:absolute;top:501px;height:21px;line-height:23px;font-size:12.8px;white-space:nowrap;left:15px;width:29px;text-align:center;color:#fff;font-size:11.5px">18</div><div style="position:absolute;top:501px;height:21px;line-height:23px;font-size:12.8px;white-space:nowrap;left:47px;color:#222">06/2017</div><div style="position:absolute;top:501px;height:21px;line-height:23px;font-size:12.8px;white-space:nowrap;right:1083px;color:#0656c8;text-align:right">339,718.06</div><div style="position:absolute;top:501px;height:21px;line-height:23px;font-size:12.8px;white-space:nowrap;right:1023px;color:#222;text-align:right">15.63</div><div style="position:absolute;top:501px;height:21px;line-height:23px;font-size:12.8px;white-space:nowrap;right:935px;color:#008000;text-align:right">437,791</div><div style="position:absolute;top:501px;height:21px;line-height:23px;font-size:12.8px;white-space:nowrap;right:885px;color:#222;text-align:right">11.22</div><svg class="abs" style="left:207px;top:507.2px" width="11" height="11" viewBox="0 0 11 11"><rect x="0.4" y="4.6" width="2.4" height="5.2" fill="#2020f0"/><path d="M3.3 4.9 L5.4 1.3 Q6.5 0.9 6.7 2 L6.2 4.3 L8.9 4.3 Q9.8 4.5 9.6 5.6 L8.9 9.1 Q8.6 9.9 7.8 9.9 L3.3 9.9 Z" fill="none" stroke="#2a2af0" stroke-width="1"/></svg><div style="position:absolute;top:523px;height:21px;line-height:23px;font-size:12.8px;white-space:nowrap;left:15px;width:29px;text-align:center;color:#fff;font-size:11.5px">19</div><div style="position:absolute;top:523px;height:21px;line-height:23px;font-size:12.8px;white-space:nowrap;left:47px;color:#222">07/2017</div><div style="position:absolute;top:523px;height:21px;line-height:23px;font-size:12.8px;white-space:nowrap;right:1083px;color:#0656c8;text-align:right">224,745.12</div><div style="position:absolute;top:523px;height:21px;line-height:23px;font-size:12.8px;white-space:nowrap;right:1023px;color:#222;text-align:right">-33.84</div><div style="position:absolute;top:523px;height:21px;line-height:23px;font-size:12.8px;white-space:nowrap;right:935px;color:#008000;text-align:right">281,975</div><div style="position:absolute;top:523px;height:21px;line-height:23px;font-size:12.8px;white-space:nowrap;right:885px;color:#222;text-align:right">-35.59</div><svg class="abs" style="left:207px;top:530.6px" width="11" height="11" viewBox="0 0 11 11"><rect x="0.4" y="1.2" width="2.4" height="5.2" fill="#f2402a"/><path d="M3.3 6.1 L5.4 9.7 Q6.5 10.1 6.7 9 L6.2 6.7 L8.9 6.7 Q9.8 6.5 9.6 5.4 L8.9 1.9 Q8.6 1.1 7.8 1.1 L3.3 1.1 Z" fill="none" stroke="#f2402a" stroke-width="1"/></svg><div style="position:absolute;top:545px;height:21px;line-height:23px;font-size:12.8px;white-space:nowrap;left:15px;width:29px;text-align:center;color:#fff;font-size:11.5px">20</div><div style="position:absolute;top:545px;height:21px;line-height:23px;font-size:12.8px;white-space:nowrap;left:47px;color:#222">08/2017</div><div style="position:absolute;top:545px;height:21px;line-height:23px;font-size:12.8px;white-space:nowrap;right:1083px;color:#0656c8;text-align:right">430,255.17</div><div style="position:absolute;top:545px;height:21px;line-height:23px;font-size:12.8px;white-space:nowrap;right:1023px;color:#222;text-align:right">91.44</div><div style="position:absolute;top:545px;height:21px;line-height:23px;font-size:12.8px;white-space:nowrap;right:935px;color:#008000;text-align:right">448,369</div><div style="position:absolute;top:545px;height:21px;line-height:23px;font-size:12.8px;white-space:nowrap;right:885px;color:#222;text-align:right">59.01</div><svg class="abs" style="left:207px;top:551.2px" width="11" height="11" viewBox="0 0 11 11"><rect x="0.4" y="4.6" width="2.4" height="5.2" fill="#2020f0"/><path d="M3.3 4.9 L5.4 1.3 Q6.5 0.9 6.7 2 L6.2 4.3 L8.9 4.3 Q9.8 4.5 9.6 5.6 L8.9 9.1 Q8.6 9.9 7.8 9.9 L3.3 9.9 Z" fill="none" stroke="#2a2af0" stroke-width="1"/></svg><div style="position:absolute;top:567px;height:21px;line-height:23px;font-size:12.8px;white-space:nowrap;left:15px;width:29px;text-align:center;color:#fff;font-size:11.5px">21</div><div style="position:absolute;top:567px;height:21px;line-height:23px;font-size:12.8px;white-space:nowrap;left:47px;color:#222">09/2017</div><div style="position:absolute;top:567px;height:21px;line-height:23px;font-size:12.8px;white-space:nowrap;right:1083px;color:#0656c8;text-align:right">344,443.60</div><div style="position:absolute;top:567px;height:21px;line-height:23px;font-size:12.8px;white-space:nowrap;right:1023px;color:#222;text-align:right">-19.94</div><div style="position:absolute;top:567px;height:21px;line-height:23px;font-size:12.8px;white-space:nowrap;right:935px;color:#008000;text-align:right">368,000</div><div style="position:absolute;top:567px;height:21px;line-height:23px;font-size:12.8px;white-space:nowrap;right:885px;color:#222;text-align:right">-17.92</div><svg class="abs" style="left:207px;top:574.6px" width="11" height="11" viewBox="0 0 11 11"><rect x="0.4" y="1.2" width="2.4" height="5.2" fill="#f2402a"/><path d="M3.3 6.1 L5.4 9.7 Q6.5 10.1 6.7 9 L6.2 6.7 L8.9 6.7 Q9.8 6.5 9.6 5.4 L8.9 1.9 Q8.6 1.1 7.8 1.1 L3.3 1.1 Z" fill="none" stroke="#f2402a" stroke-width="1"/></svg><div style="position:absolute;top:589px;height:21px;line-height:23px;font-size:12.8px;white-space:nowrap;left:15px;width:29px;text-align:center;color:#fff;font-size:11.5px">22</div><div style="position:absolute;top:589px;height:21px;line-height:23px;font-size:12.8px;white-space:nowrap;left:47px;color:#222">10/2017</div><div style="position:absolute;top:589px;height:21px;line-height:23px;font-size:12.8px;white-space:nowrap;right:1083px;color:#0656c8;text-align:right">386,368.78</div><div style="position:absolute;top:589px;height:21px;line-height:23px;font-size:12.8px;white-space:nowrap;right:1023px;color:#222;text-align:right">12.17</div><div style="position:absolute;top:589px;height:21px;line-height:23px;font-size:12.8px;white-space:nowrap;right:935px;color:#008000;text-align:right">413,752</div><div style="position:absolute;top:589px;height:21px;line-height:23px;font-size:12.8px;white-space:nowrap;right:885px;color:#222;text-align:right">12.43</div><svg class="abs" style="left:207px;top:595.2px" width="11" height="11" viewBox="0 0 11 11"><rect x="0.4" y="4.6" width="2.4" height="5.2" fill="#2020f0"/><path d="M3.3 4.9 L5.4 1.3 Q6.5 0.9 6.7 2 L6.2 4.3 L8.9 4.3 Q9.8 4.5 9.6 5.6 L8.9 9.1 Q8.6 9.9 7.8 9.9 L3.3 9.9 Z" fill="none" stroke="#2a2af0" stroke-width="1"/></svg><div style="position:absolute;top:611px;height:21px;line-height:23px;font-size:12.8px;white-space:nowrap;left:15px;width:29px;text-align:center;color:#fff;font-size:11.5px">23</div><div style="position:absolute;top:611px;height:21px;line-height:23px;font-size:12.8px;white-space:nowrap;left:47px;color:#222">11/2017</div><div style="position:absolute;top:611px;height:21px;line-height:23px;font-size:12.8px;white-space:nowrap;right:1083px;color:#0656c8;text-align:right">444,416.62</div><div style="position:absolute;top:611px;height:21px;line-height:23px;font-size:12.8px;white-space:nowrap;right:1023px;color:#222;text-align:right">15.02</div><div style="position:absolute;top:611px;height:21px;line-height:23px;font-size:12.8px;white-space:nowrap;right:935px;color:#008000;text-align:right">404,252</div><div style="position:absolute;top:611px;height:21px;line-height:23px;font-size:12.8px;white-space:nowrap;right:885px;color:#222;text-align:right">-2.30</div><svg class="abs" style="left:207px;top:617.2px" width="11" height="11" viewBox="0 0 11 11"><rect x="0.4" y="4.6" width="2.4" height="5.2" fill="#2020f0"/><path d="M3.3 4.9 L5.4 1.3 Q6.5 0.9 6.7 2 L6.2 4.3 L8.9 4.3 Q9.8 4.5 9.6 5.6 L8.9 9.1 Q8.6 9.9 7.8 9.9 L3.3 9.9 Z" fill="none" stroke="#2a2af0" stroke-width="1"/></svg><div style="position:absolute;top:633px;height:21px;line-height:23px;font-size:12.8px;white-space:nowrap;left:15px;width:29px;text-align:center;color:#fff;font-size:11.5px">24</div><div style="position:absolute;top:633px;height:21px;line-height:23px;font-size:12.8px;white-space:nowrap;left:47px;color:#222">12/2017</div><div style="position:absolute;top:633px;height:21px;line-height:23px;font-size:12.8px;white-space:nowrap;right:1083px;color:#0656c8;text-align:right">452,943.61</div><div style="position:absolute;top:633px;height:21px;line-height:23px;font-size:12.8px;white-space:nowrap;right:1023px;color:#222;text-align:right">1.92</div><div style="position:absolute;top:633px;height:21px;line-height:23px;font-size:12.8px;white-space:nowrap;right:935px;color:#008000;text-align:right">389,068</div><div style="position:absolute;top:633px;height:21px;line-height:23px;font-size:12.8px;white-space:nowrap;right:885px;color:#222;text-align:right">-3.76</div><svg class="abs" style="left:207px;top:639.2px" width="11" height="11" viewBox="0 0 11 11"><rect x="0.4" y="4.6" width="2.4" height="5.2" fill="#2020f0"/><path d="M3.3 4.9 L5.4 1.3 Q6.5 0.9 6.7 2 L6.2 4.3 L8.9 4.3 Q9.8 4.5 9.6 5.6 L8.9 9.1 Q8.6 9.9 7.8 9.9 L3.3 9.9 Z" fill="none" stroke="#2a2af0" stroke-width="1"/></svg><div style="position:absolute;top:673px;height:19px;line-height:19px;font-size:12.8px;font-weight:bold;white-space:nowrap;left:47px;color:#222">Total</div><div style="position:absolute;top:673px;height:19px;line-height:19px;font-size:12.8px;font-weight:bold;white-space:nowrap;right:1082px;color:#0656c8;letter-spacing:0.7px">9,419,467.08</div><div style="position:absolute;top:673px;height:19px;line-height:19px;font-size:12.8px;font-weight:bold;white-space:nowrap;right:1023px;color:#222;letter-spacing:0.5px">0.00</div><div style="position:absolute;top:673px;height:19px;line-height:19px;font-size:12.8px;font-weight:bold;white-space:nowrap;right:935px;color:#008000;letter-spacing:0.8px">9,945,218</div><div style="position:absolute;top:673px;height:19px;line-height:19px;font-size:12.8px;font-weight:bold;white-space:nowrap;right:885px;color:#222;letter-spacing:0.5px">0.00</div><div class="abs" style="left:12px;top:698px;width:1262px;height:20px;background:#80acd8"></div><div class="abs" style="left:432px;top:103px;width:842px;height:278px;border:1px solid #dcdcdc;border-top:none"></div><div class="ph abs" style="left:432px;top:83px;width:840px;right:auto"><span>Increase by Price</span></div><div class="ibtn" style="left:1234px;top:84px"></div><svg class="abs" style="left:1235.6px;top:88.4px" width="14" height="14" viewBox="0 0 14 14"><circle cx="7" cy="7" r="5.6" fill="#fff"/><circle cx="7.1" cy="4.2" r="1.15" fill="#80acd8"/><path d="M5.5 6.1 H7.9 V9.6 H8.8 V10.6 H5.4 V9.6 H6.3 V7.1 H5.5 Z" fill="#80acd8"/></svg><div class="ibtn" style="left:1253px;top:84px"></div><svg class="abs" style="left:1253px;top:84px" width="18" height="18" viewBox="0 0 18 18"><path d="M4.6 15.4 L13.4 7.6" stroke="#fff" stroke-width="1.8"/><path d="M10.2 6.2 L15 5.8 L14.6 10.6 Z" fill="#fff"/><path d="M3 12.2 L3 17 L7.8 17 Z" fill="#fff"/></svg><svg class="abs" style="left:0;top:83px" width="1283" height="300" viewBox="0 83 1283 300" font-family='"Liberation Sans", sans-serif'><line x1="500" x2="1182" y1="113.5" y2="113.5" stroke="#e3e3e3" stroke-width="1"/><line x1="500" x2="1182" y1="174.5" y2="174.5" stroke="#e3e3e3" stroke-width="1"/><line x1="500" x2="1182" y1="235.5" y2="235.5" stroke="#e3e3e3" stroke-width="1"/><text x="485.5" y="117.8" text-anchor="end" font-size="11" fill="#5c5c5c">600,000</text><text x="485.5" y="178" text-anchor="end" font-size="11" fill="#5c5c5c">400,000</text><text x="485.5" y="238.2" text-anchor="end" font-size="11" fill="#5c5c5c">200,000</text><text x="485.5" y="298.5" text-anchor="end" font-size="11" fill="#5c5c5c">0</text><line x1="500" x2="1183" y1="295.5" y2="295.5" stroke="#d5ddee" stroke-width="1.2"/><line x1="499.7" x2="499.7" y1="295" y2="305" stroke="#dfe5f3" stroke-width="1.6"/><line x1="528.106" x2="528.106" y1="295" y2="305" stroke="#dfe5f3" stroke-width="1.6"/><line x1="556.512" x2="556.512" y1="295" y2="305" stroke="#dfe5f3" stroke-width="1.6"/><line x1="584.918" x2="584.918" y1="295" y2="305" stroke="#dfe5f3" stroke-width="1.6"/><line x1="613.324" x2="613.324" y1="295" y2="305" stroke="#dfe5f3" stroke-width="1.6"/><line x1="641.73" x2="641.73" y1="295" y2="305" stroke="#dfe5f3" stroke-width="1.6"/><line x1="670.136" x2="670.136" y1="295" y2="305" stroke="#dfe5f3" stroke-width="1.6"/><line x1="698.542" x2="698.542" y1="295" y2="305" stroke="#dfe5f3" stroke-width="1.6"/><line x1="726.948" x2="726.948" y1="295" y2="305" stroke="#dfe5f3" stroke-width="1.6"/><line x1="755.354" x2="755.354" y1="295" y2="305" stroke="#dfe5f3" stroke-width="1.6"/><line x1="783.76" x2="783.76" y1="295" y2="305" stroke="#dfe5f3" stroke-width="1.6"/><line x1="812.166" x2="812.166" y1="295" y2="305" stroke="#dfe5f3" stroke-width="1.6"/><line x1="840.572" x2="840.572" y1="295" y2="305" stroke="#dfe5f3" stroke-width="1.6"/><line x1="868.978" x2="868.978" y1="295" y2="305" stroke="#dfe5f3" stroke-width="1.6"/><line x1="897.384" x2="897.384" y1="295" y2="305" stroke="#dfe5f3" stroke-width="1.6"/><line x1="925.79" x2="925.79" y1="295" y2="305" stroke="#dfe5f3" stroke-width="1.6"/><line x1="954.196" x2="954.196" y1="295" y2="305" stroke="#dfe5f3" stroke-width="1.6"/><line x1="982.602" x2="982.602" y1="295" y2="305" stroke="#dfe5f3" stroke-width="1.6"/><line x1="1011.01" x2="1011.01" y1="295" y2="305" stroke="#dfe5f3" stroke-width="1.6"/><line x1="1039.41" x2="1039.41" y1="295" y2="305" stroke="#dfe5f3" stroke-width="1.6"/><line x1="1067.82" x2="1067.82" y1="295" y2="305" stroke="#dfe5f3" stroke-width="1.6"/><line x1="1096.23" x2="1096.23" y1="295" y2="305" stroke="#dfe5f3" stroke-width="1.6"/><line x1="1124.63" x2="1124.63" y1="295" y2="305" stroke="#dfe5f3" stroke-width="1.6"/><line x1="1153.04" x2="1153.04" y1="295" y2="305" stroke="#dfe5f3" stroke-width="1.6"/><line x1="1181.44" x2="1181.44" y1="295" y2="305" stroke="#dfe5f3" stroke-width="1.6"/><rect x="507.403" y="181.128" width="13" height="113.872" fill="#005ec2"/><rect x="535.809" y="149.095" width="13" height="145.905" fill="#005ec2"/><rect x="564.215" y="172.253" width="13" height="122.747" fill="#005ec2"/><rect x="592.621" y="162.745" width="13" height="132.255" fill="#005ec2"/><rect x="621.027" y="205.209" width="13" height="89.7908" fill="#005ec2"/><rect x="649.433" y="184.481" width="13" height="110.519" fill="#005ec2"/><rect x="677.839" y="200.832" width="13" height="94.1683" fill="#005ec2"/><rect x="706.245" y="153.075" width="13" height="141.925" fill="#005ec2"/><rect x="734.651" y="178.4" width="13" height="116.6" fill="#005ec2"/><rect x="763.057" y="172.121" width="13" height="122.879" fill="#005ec2"/><rect x="791.463" y="147.681" width="13" height="147.319" fill="#005ec2"/><rect x="819.869" y="146.1" width="13" height="148.9" fill="#005ec2"/><rect x="848.275" y="189.316" width="13" height="105.684" fill="#005ec2"/><rect x="876.681" y="170.309" width="13" height="124.691" fill="#005ec2"/><rect x="905.087" y="196.808" width="13" height="98.1919" fill="#005ec2"/><rect x="933.493" y="169.267" width="13" height="125.733" fill="#005ec2"/><rect x="961.899" y="207.406" width="13" height="87.5938" fill="#005ec2"/><rect x="990.305" y="193.654" width="13" height="101.346" fill="#005ec2"/><rect x="1018.71" y="228.089" width="13" height="66.9112" fill="#005ec2"/><rect x="1047.12" y="166.539" width="13" height="128.461" fill="#005ec2"/><rect x="1075.52" y="192.239" width="13" height="102.761" fill="#005ec2"/><rect x="1103.93" y="179.683" width="13" height="115.317" fill="#005ec2"/><rect x="1132.34" y="162.297" width="13" height="132.703" fill="#005ec2"/><rect x="1160.74" y="159.743" width="13" height="135.257" fill="#005ec2"/><polyline points="513.903,180.037 542.309,163.994 570.715,166.379 599.121,165.19 627.527,172.983 655.933,174.719 684.339,178.298 712.745,175.003 741.151,175.259 769.557,174.834 797.963,172.262 826.369,169.986 854.775,171.39 883.181,171.233 911.587,172.867 939.993,172.573 968.399,174.56 996.805,175.562 1025.21,178.273 1053.62,177.631 1082.02,178.275 1110.43,178.289 1138.84,177.545 1167.24,176.757" fill="none" stroke="#7db3ea" stroke-width="2.6" stroke-linejoin="round"/><circle cx="513.903" cy="180.037" r="4" fill="#7db3ea"/><circle cx="542.309" cy="163.994" r="4" fill="#7db3ea"/><circle cx="570.715" cy="166.379" r="4" fill="#7db3ea"/><circle cx="599.121" cy="165.19" r="4" fill="#7db3ea"/><circle cx="627.527" cy="172.983" r="4" fill="#7db3ea"/><circle cx="655.933" cy="174.719" r="4" fill="#7db3ea"/><circle cx="684.339" cy="178.298" r="4" fill="#7db3ea"/><circle cx="712.745" cy="175.003" r="4" fill="#7db3ea"/><circle cx="741.151" cy="175.259" r="4" fill="#7db3ea"/><circle cx="769.557" cy="174.834" r="4" fill="#7db3ea"/><circle cx="797.963" cy="172.262" r="4" fill="#7db3ea"/><circle cx="826.369" cy="169.986" r="4" fill="#7db3ea"/><circle cx="854.775" cy="171.39" r="4" fill="#7db3ea"/><circle cx="883.181" cy="171.233" r="4" fill="#7db3ea"/><circle cx="911.587" cy="172.867" r="4" fill="#7db3ea"/><circle cx="939.993" cy="172.573" r="4" fill="#7db3ea"/><circle cx="968.399" cy="174.56" r="4" fill="#7db3ea"/><circle cx="996.805" cy="175.562" r="4" fill="#7db3ea"/><circle cx="1025.21" cy="178.273" r="4" fill="#7db3ea"/><circle cx="1053.62" cy="177.631" r="4" fill="#7db3ea"/><circle cx="1082.02" cy="178.275" r="4" fill="#7db3ea"/><circle cx="1110.43" cy="178.289" r="4" fill="#7db3ea"/><circle cx="1138.84" cy="177.545" r="4" fill="#7db3ea"/><circle cx="1167.24" cy="176.757" r="4" fill="#7db3ea"/><text x="523" y="172.4" text-anchor="middle" font-size="11" font-weight="bold" fill="#fff" stroke="#000" stroke-width="2.2" paint-order="stroke" stroke-linejoin="round" textLength="44" lengthAdjust="spacingAndGlyphs">381,542</text><text x="544.2" y="140.3" text-anchor="middle" font-size="11" font-weight="bold" fill="#000" stroke="#fff" stroke-width="2.6" paint-order="stroke" stroke-linejoin="round" textLength="44" lengthAdjust="spacingAndGlyphs">488,496</text><text x="601" y="153.2" text-anchor="middle" font-size="11" font-weight="bold" fill="#000" stroke="#fff" stroke-width="2.6" paint-order="stroke" stroke-linejoin="round" textLength="44" lengthAdjust="spacingAndGlyphs">442,923</text><text x="629" y="195.8" text-anchor="middle" font-size="11" font-weight="bold" fill="#000" stroke="#fff" stroke-width="2.6" paint-order="stroke" stroke-linejoin="round" textLength="44" lengthAdjust="spacingAndGlyphs">301,138</text><text x="657" y="174.8" text-anchor="middle" font-size="11" font-weight="bold" fill="#000" stroke="#fff" stroke-width="2.6" paint-order="stroke" stroke-linejoin="round" textLength="44" lengthAdjust="spacingAndGlyphs">370,349</text><text x="686.4" y="191.9" text-anchor="middle" font-size="11" font-weight="bold" fill="#000" stroke="#fff" stroke-width="2.6" paint-order="stroke" stroke-linejoin="round" textLength="44" lengthAdjust="spacingAndGlyphs">315,754</text><text x="714.4" y="143.6" text-anchor="middle" font-size="11" font-weight="bold" fill="#000" stroke="#fff" stroke-width="2.6" paint-order="stroke" stroke-linejoin="round" textLength="44" lengthAdjust="spacingAndGlyphs">475,208</text><text x="711.7" y="165.5" text-anchor="middle" font-size="11" font-weight="bold" fill="#000" stroke="#fff" stroke-width="2.6" paint-order="stroke" stroke-linejoin="round" textLength="61" lengthAdjust="spacingAndGlyphs">398,323.19</text><text x="770.5" y="163.1" text-anchor="middle" font-size="11" font-weight="bold" fill="#000" stroke="#fff" stroke-width="2.6" paint-order="stroke" stroke-linejoin="round" textLength="44" lengthAdjust="spacingAndGlyphs">411,617</text><text x="828.2" y="137.4" text-anchor="middle" font-size="11" font-weight="bold" fill="#000" stroke="#fff" stroke-width="2.6" paint-order="stroke" stroke-linejoin="round" textLength="44" lengthAdjust="spacingAndGlyphs">498,497</text><text x="825.5" y="161" text-anchor="middle" font-size="11" font-weight="bold" fill="#000" stroke="#fff" stroke-width="2.6" paint-order="stroke" stroke-linejoin="round" textLength="61" lengthAdjust="spacingAndGlyphs">415,047.60</text><text x="856.6" y="180.2" text-anchor="middle" font-size="11" font-weight="bold" fill="#000" stroke="#fff" stroke-width="2.6" paint-order="stroke" stroke-linejoin="round" textLength="44" lengthAdjust="spacingAndGlyphs">354,204</text><text x="884.3" y="161.2" text-anchor="middle" font-size="11" font-weight="bold" fill="#000" stroke="#fff" stroke-width="2.6" paint-order="stroke" stroke-linejoin="round" textLength="44" lengthAdjust="spacingAndGlyphs">417,665</text><text x="913.2" y="188" text-anchor="middle" font-size="11" font-weight="bold" fill="#000" stroke="#fff" stroke-width="2.6" paint-order="stroke" stroke-linejoin="round" textLength="44" lengthAdjust="spacingAndGlyphs">329,188</text><text x="941.2" y="160" text-anchor="middle" font-size="11" font-weight="bold" fill="#000" stroke="#fff" stroke-width="2.6" paint-order="stroke" stroke-linejoin="round" textLength="44" lengthAdjust="spacingAndGlyphs">421,145</text><text x="998.5" y="184.8" text-anchor="middle" font-size="11" font-weight="bold" fill="#000" stroke="#fff" stroke-width="2.6" paint-order="stroke" stroke-linejoin="round" textLength="44" lengthAdjust="spacingAndGlyphs">339,718</text><text x="996.3" y="165.4" text-anchor="middle" font-size="11" font-weight="bold" fill="#000" stroke="#fff" stroke-width="2.6" paint-order="stroke" stroke-linejoin="round" textLength="61" lengthAdjust="spacingAndGlyphs">396,460.79</text><text x="1026.2" y="218.8" text-anchor="middle" font-size="11" font-weight="bold" fill="#000" stroke="#fff" stroke-width="2.6" paint-order="stroke" stroke-linejoin="round" textLength="44" lengthAdjust="spacingAndGlyphs">224,745</text><text x="1055.2" y="156.5" text-anchor="middle" font-size="11" font-weight="bold" fill="#000" stroke="#fff" stroke-width="2.6" paint-order="stroke" stroke-linejoin="round" textLength="44" lengthAdjust="spacingAndGlyphs">430,255</text><text x="1111.3" y="169.9" text-anchor="middle" font-size="11" font-weight="bold" fill="#000" stroke="#fff" stroke-width="2.6" paint-order="stroke" stroke-linejoin="round" textLength="44" lengthAdjust="spacingAndGlyphs">386,369</text><text x="1161" y="149.9" text-anchor="middle" font-size="11" font-weight="bold" fill="#fff" stroke="#000" stroke-width="2.2" paint-order="stroke" stroke-linejoin="round" textLength="44" lengthAdjust="spacingAndGlyphs">452,944</text><text x="0" y="0" transform="translate(516.403 310.5) rotate(-45)" text-anchor="end" font-size="11" fill="#6a6a6a">01/2016</text><text x="0" y="0" transform="translate(544.809 310.5) rotate(-45)" text-anchor="end" font-size="11" fill="#6a6a6a">02/2016</text><text x="0" y="0" transform="translate(573.215 310.5) rotate(-45)" text-anchor="end" font-size="11" fill="#6a6a6a">03/2016</text><text x="0" y="0" transform="translate(601.621 310.5) rotate(-45)" text-anchor="end" font-size="11" fill="#6a6a6a">04/2016</text><text x="0" y="0" transform="translate(630.027 310.5) rotate(-45)" text-anchor="end" font-size="11" fill="#6a6a6a">05/2016</text><text x="0" y="0" transform="translate(658.433 310.5) rotate(-45)" text-anchor="end" font-size="11" fill="#6a6a6a">06/2016</text><text x="0" y="0" transform="translate(686.839 310.5) rotate(-45)" text-anchor="end" font-size="11" fill="#6a6a6a">07/2016</text><text x="0" y="0" transform="translate(715.245 310.5) rotate(-45)" text-anchor="end" font-size="11" fill="#6a6a6a">08/2016</text><text x="0" y="0" transform="translate(743.651 310.5) rotate(-45)" text-anchor="end" font-size="11" fill="#6a6a6a">09/2016</text><text x="0" y="0" transform="translate(772.057 310.5) rotate(-45)" text-anchor="end" font-size="11" fill="#6a6a6a">10/2016</text><text x="0" y="0" transform="translate(800.463 310.5) rotate(-45)" text-anchor="end" font-size="11" fill="#6a6a6a">11/2016</text><text x="0" y="0" transform="translate(828.869 310.5) rotate(-45)" text-anchor="end" font-size="11" fill="#6a6a6a">12/2016</text><text x="0" y="0" transform="translate(857.275 310.5) rotate(-45)" text-anchor="end" font-size="11" fill="#6a6a6a">01/2017</text><text x="0" y="0" transform="translate(885.681 310.5) rotate(-45)" text-anchor="end" font-size="11" fill="#6a6a6a">02/2017</text><text x="0" y="0" transform="translate(914.087 310.5) rotate(-45)" text-anchor="end" font-size="11" fill="#6a6a6a">03/2017</text><text x="0" y="0" transform="translate(942.493 310.5) rotate(-45)" text-anchor="end" font-size="11" fill="#6a6a6a">04/2017</text><text x="0" y="0" transform="translate(970.899 310.5) rotate(-45)" text-anchor="end" font-size="11" fill="#6a6a6a">05/2017</text><text x="0" y="0" transform="translate(999.305 310.5) rotate(-45)" text-anchor="end" font-size="11" fill="#6a6a6a">06/2017</text><text x="0" y="0" transform="translate(1027.71 310.5) rotate(-45)" text-anchor="end" font-size="11" fill="#6a6a6a">07/2017</text><text x="0" y="0" transform="translate(1056.12 310.5) rotate(-45)" text-anchor="end" font-size="11" fill="#6a6a6a">08/2017</text><text x="0" y="0" transform="translate(1084.52 310.5) rotate(-45)" text-anchor="end" font-size="11" fill="#6a6a6a">09/2017</text><text x="0" y="0" transform="translate(1112.93 310.5) rotate(-45)" text-anchor="end" font-size="11" fill="#6a6a6a">10/2017</text><text x="0" y="0" transform="translate(1141.34 310.5) rotate(-45)" text-anchor="end" font-size="11" fill="#6a6a6a">11/2017</text><text x="0" y="0" transform="translate(1169.74 310.5) rotate(-45)" text-anchor="end" font-size="11" fill="#6a6a6a">12/2017</text><text x="841.4" y="360.9" text-anchor="middle" font-size="12.5" fill="#5a5a5a" textLength="64" lengthAdjust="spacing">Month/Year</text><circle cx="1209.3" cy="231.9" r="6.2" fill="#005ec2"/><text x="1223.5" y="236.9" font-size="12" font-weight="bold" fill="#000">Price</text><line x1="1201.3" x2="1217.3" y1="248.8" y2="248.8" stroke="#7db3ea" stroke-width="2.4"/><circle cx="1209.3" cy="248.8" r="3.9" fill="#7db3ea"/><text x="1223.5" y="252.8" font-size="12" font-weight="bold" fill="#000">Avg</text></svg><div class="abs" style="left:432px;top:416px;width:842px;height:278px;border:1px solid #dcdcdc;border-top:none"></div><div class="ph abs" style="left:432px;top:396px;width:840px;right:auto"><span>Increase by Quantity</span></div><div class="ibtn" style="left:1234px;top:397px"></div><svg class="abs" style="left:1235.6px;top:401.4px" width="14" height="14" viewBox="0 0 14 14"><circle cx="7" cy="7" r="5.6" fill="#fff"/><circle cx="7.1" cy="4.2" r="1.15" fill="#80acd8"/><path d="M5.5 6.1 H7.9 V9.6 H8.8 V10.6 H5.4 V9.6 H6.3 V7.1 H5.5 Z" fill="#80acd8"/></svg><div class="ibtn" style="left:1253px;top:397px"></div><svg class="abs" style="left:1253px;top:397px" width="18" height="18" viewBox="0 0 18 18"><path d="M4.6 15.4 L13.4 7.6" stroke="#fff" stroke-width="1.8"/><path d="M10.2 6.2 L15 5.8 L14.6 10.6 Z" fill="#fff"/><path d="M3 12.2 L3 17 L7.8 17 Z" fill="#fff"/></svg><svg class="abs" style="left:0;top:396px" width="1283" height="300" viewBox="0 83 1283 300" font-family='"Liberation Sans", sans-serif'><line x1="500" x2="1156" y1="113.5" y2="113.5" stroke="#e3e3e3" stroke-width="1"/><line x1="500" x2="1156" y1="174.5" y2="174.5" stroke="#e3e3e3" stroke-width="1"/><line x1="500" x2="1156" y1="235.5" y2="235.5" stroke="#e3e3e3" stroke-width="1"/><text x="485.5" y="117.8" text-anchor="end" font-size="11" fill="#5c5c5c">600,000</text><text x="485.5" y="178" text-anchor="end" font-size="11" fill="#5c5c5c">400,000</text><text x="485.5" y="238.2" text-anchor="end" font-size="11" fill="#5c5c5c">200,000</text><text x="485.5" y="298.5" text-anchor="end" font-size="11" fill="#5c5c5c">0</text><line x1="500" x2="1157" y1="295.5" y2="295.5" stroke="#d5ddee" stroke-width="1.2"/><line x1="500.1" x2="500.1" y1="295" y2="305" stroke="#dfe5f3" stroke-width="1.6"/><line x1="527.46" x2="527.46" y1="295" y2="305" stroke="#dfe5f3" stroke-width="1.6"/><line x1="554.82" x2="554.82" y1="295" y2="305" stroke="#dfe5f3" stroke-width="1.6"/><line x1="582.18" x2="582.18" y1="295" y2="305" stroke="#dfe5f3" stroke-width="1.6"/><line x1="609.54" x2="609.54" y1="295" y2="305" stroke="#dfe5f3" stroke-width="1.6"/><line x1="636.9" x2="636.9" y1="295" y2="305" stroke="#dfe5f3" stroke-width="1.6"/><line x1="664.26" x2="664.26" y1="295" y2="305" stroke="#dfe5f3" stroke-width="1.6"/><line x1="691.62" x2="691.62" y1="295" y2="305" stroke="#dfe5f3" stroke-width="1.6"/><line x1="718.98" x2="718.98" y1="295" y2="305" stroke="#dfe5f3" stroke-width="1.6"/><line x1="746.34" x2="746.34" y1="295" y2="305" stroke="#dfe5f3" stroke-width="1.6"/><line x1="773.7" x2="773.7" y1="295" y2="305" stroke="#dfe5f3" stroke-width="1.6"/><line x1="801.06" x2="801.06" y1="295" y2="305" stroke="#dfe5f3" stroke-width="1.6"/><line x1="828.42" x2="828.42" y1="295" y2="305" stroke="#dfe5f3" stroke-width="1.6"/><line x1="855.78" x2="855.78" y1="295" y2="305" stroke="#dfe5f3" stroke-width="1.6"/><line x1="883.14" x2="883.14" y1="295" y2="305" stroke="#dfe5f3" stroke-width="1.6"/><line x1="910.5" x2="910.5" y1="295" y2="305" stroke="#dfe5f3" stroke-width="1.6"/><line x1="937.86" x2="937.86" y1="295" y2="305" stroke="#dfe5f3" stroke-width="1.6"/><line x1="965.22" x2="965.22" y1="295" y2="305" stroke="#dfe5f3" stroke-width="1.6"/><line x1="992.58" x2="992.58" y1="295" y2="305" stroke="#dfe5f3" stroke-width="1.6"/><line x1="1019.94" x2="1019.94" y1="295" y2="305" stroke="#dfe5f3" stroke-width="1.6"/><line x1="1047.3" x2="1047.3" y1="295" y2="305" stroke="#dfe5f3" stroke-width="1.6"/><line x1="1074.66" x2="1074.66" y1="295" y2="305" stroke="#dfe5f3" stroke-width="1.6"/><line x1="1102.02" x2="1102.02" y1="295" y2="305" stroke="#dfe5f3" stroke-width="1.6"/><line x1="1129.38" x2="1129.38" y1="295" y2="305" stroke="#dfe5f3" stroke-width="1.6"/><line x1="1156.74" x2="1156.74" y1="295" y2="305" stroke="#dfe5f3" stroke-width="1.6"/><rect x="507.28" y="181.258" width="13" height="113.742" fill="#007b00"/><rect x="534.64" y="153.132" width="13" height="141.868" fill="#007b00"/><rect x="562" y="140.227" width="13" height="154.773" fill="#007b00"/><rect x="589.36" y="172.597" width="13" height="122.403" fill="#007b00"/><rect x="616.72" y="176.688" width="13" height="118.312" fill="#007b00"/><rect x="644.08" y="158.248" width="13" height="136.752" fill="#007b00"/><rect x="671.44" y="178.777" width="13" height="116.223" fill="#007b00"/><rect x="698.8" y="152.576" width="13" height="142.424" fill="#007b00"/><rect x="726.16" y="175.651" width="13" height="119.349" fill="#007b00"/><rect x="753.52" y="166.342" width="13" height="128.658" fill="#007b00"/><rect x="780.88" y="162.568" width="13" height="132.432" fill="#007b00"/><rect x="808.24" y="173.452" width="13" height="121.548" fill="#007b00"/><rect x="835.6" y="187.144" width="13" height="107.856" fill="#007b00"/><rect x="862.96" y="165.67" width="13" height="129.33" fill="#007b00"/><rect x="890.32" y="170.409" width="13" height="124.591" fill="#007b00"/><rect x="917.68" y="175.751" width="13" height="119.249" fill="#007b00"/><rect x="945.04" y="177.705" width="13" height="117.295" fill="#007b00"/><rect x="972.4" y="164.482" width="13" height="130.518" fill="#007b00"/><rect x="999.76" y="211.148" width="13" height="83.8515" fill="#007b00"/><rect x="1027.12" y="161.313" width="13" height="133.687" fill="#007b00"/><rect x="1054.48" y="185.384" width="13" height="109.616" fill="#007b00"/><rect x="1081.84" y="171.681" width="13" height="123.319" fill="#007b00"/><rect x="1109.2" y="174.527" width="13" height="120.473" fill="#007b00"/><rect x="1136.56" y="179.074" width="13" height="115.926" fill="#007b00"/><polyline points="513.78,179.967 541.14,165.881 568.5,156.876 595.86,160.48 623.22,163.462 650.58,162.372 677.94,164.53 705.3,162.869 732.66,164.144 760.02,164.233 787.38,163.961 814.74,164.643 842.1,166.276 869.46,166.138 896.82,166.336 924.18,166.843 951.54,167.406 978.9,167.17 1006.26,169.419 1033.62,168.948 1060.98,169.669 1088.34,169.701 1115.7,169.855 1143.06,170.185" fill="none" stroke="#7db3ea" stroke-width="2.6" stroke-linejoin="round"/><circle cx="513.78" cy="179.967" r="4" fill="#7db3ea"/><circle cx="541.14" cy="165.881" r="4" fill="#7db3ea"/><circle cx="568.5" cy="156.876" r="4" fill="#7db3ea"/><circle cx="595.86" cy="160.48" r="4" fill="#7db3ea"/><circle cx="623.22" cy="163.462" r="4" fill="#7db3ea"/><circle cx="650.58" cy="162.372" r="4" fill="#7db3ea"/><circle cx="677.94" cy="164.53" r="4" fill="#7db3ea"/><circle cx="705.3" cy="162.869" r="4" fill="#7db3ea"/><circle cx="732.66" cy="164.144" r="4" fill="#7db3ea"/><circle cx="760.02" cy="164.233" r="4" fill="#7db3ea"/><circle cx="787.38" cy="163.961" r="4" fill="#7db3ea"/><circle cx="814.74" cy="164.643" r="4" fill="#7db3ea"/><circle cx="842.1" cy="166.276" r="4" fill="#7db3ea"/><circle cx="869.46" cy="166.138" r="4" fill="#7db3ea"/><circle cx="896.82" cy="166.336" r="4" fill="#7db3ea"/><circle cx="924.18" cy="166.843" r="4" fill="#7db3ea"/><circle cx="951.54" cy="167.406" r="4" fill="#7db3ea"/><circle cx="978.9" cy="167.17" r="4" fill="#7db3ea"/><circle cx="1006.26" cy="169.419" r="4" fill="#7db3ea"/><circle cx="1033.62" cy="168.948" r="4" fill="#7db3ea"/><circle cx="1060.98" cy="169.669" r="4" fill="#7db3ea"/><circle cx="1088.34" cy="169.701" r="4" fill="#7db3ea"/><circle cx="1115.7" cy="169.855" r="4" fill="#7db3ea"/><circle cx="1143.06" cy="170.185" r="4" fill="#7db3ea"/><text x="523.1" y="171.4" text-anchor="middle" font-size="11" font-weight="bold" fill="#fff" stroke="#000" stroke-width="2.2" paint-order="stroke" stroke-linejoin="round" textLength="44" lengthAdjust="spacingAndGlyphs">381,776</text><text x="570.7" y="130.8" text-anchor="middle" font-size="11" font-weight="bold" fill="#000" stroke="#fff" stroke-width="2.6" paint-order="stroke" stroke-linejoin="round" textLength="44" lengthAdjust="spacingAndGlyphs">518,775</text><text x="597.2" y="162.5" text-anchor="middle" font-size="11" font-weight="bold" fill="#000" stroke="#fff" stroke-width="2.6" paint-order="stroke" stroke-linejoin="round" textLength="44" lengthAdjust="spacingAndGlyphs">410,693</text><text x="652.5" y="149.2" text-anchor="middle" font-size="11" font-weight="bold" fill="#000" stroke="#fff" stroke-width="2.6" paint-order="stroke" stroke-linejoin="round" textLength="44" lengthAdjust="spacingAndGlyphs">458,605</text><text x="679" y="168.9" text-anchor="middle" font-size="11" font-weight="bold" fill="#000" stroke="#fff" stroke-width="2.6" paint-order="stroke" stroke-linejoin="round" textLength="44" lengthAdjust="spacingAndGlyphs">390,061</text><text x="706.6" y="142.7" text-anchor="middle" font-size="11" font-weight="bold" fill="#000" stroke="#fff" stroke-width="2.6" paint-order="stroke" stroke-linejoin="round" textLength="44" lengthAdjust="spacingAndGlyphs">477,544</text><text x="734.3" y="166.1" text-anchor="middle" font-size="11" font-weight="bold" fill="#000" stroke="#fff" stroke-width="2.6" paint-order="stroke" stroke-linejoin="round" textLength="44" lengthAdjust="spacingAndGlyphs">400,497</text><text x="788.5" y="152.9" text-anchor="middle" font-size="11" font-weight="bold" fill="#000" stroke="#fff" stroke-width="2.6" paint-order="stroke" stroke-linejoin="round" textLength="44" lengthAdjust="spacingAndGlyphs">444,179</text><text x="843.1" y="178.3" text-anchor="middle" font-size="11" font-weight="bold" fill="#000" stroke="#fff" stroke-width="2.6" paint-order="stroke" stroke-linejoin="round" textLength="44" lengthAdjust="spacingAndGlyphs">362,122</text><text x="870.4" y="156.6" text-anchor="middle" font-size="11" font-weight="bold" fill="#000" stroke="#fff" stroke-width="2.6" paint-order="stroke" stroke-linejoin="round" textLength="44" lengthAdjust="spacingAndGlyphs">433,823</text><text x="925.8" y="166" text-anchor="middle" font-size="11" font-weight="bold" fill="#000" stroke="#fff" stroke-width="2.6" paint-order="stroke" stroke-linejoin="round" textLength="44" lengthAdjust="spacingAndGlyphs">400,162</text><text x="980.3" y="155.5" text-anchor="middle" font-size="11" font-weight="bold" fill="#000" stroke="#fff" stroke-width="2.6" paint-order="stroke" stroke-linejoin="round" textLength="44" lengthAdjust="spacingAndGlyphs">437,791</text><text x="1007.7" y="202" text-anchor="middle" font-size="11" font-weight="bold" fill="#000" stroke="#fff" stroke-width="2.6" paint-order="stroke" stroke-linejoin="round" textLength="44" lengthAdjust="spacingAndGlyphs">281,975</text><text x="1034.2" y="152.4" text-anchor="middle" font-size="11" font-weight="bold" fill="#000" stroke="#fff" stroke-width="2.6" paint-order="stroke" stroke-linejoin="round" textLength="44" lengthAdjust="spacingAndGlyphs">448,369</text><text x="1089.5" y="162.1" text-anchor="middle" font-size="11" font-weight="bold" fill="#000" stroke="#fff" stroke-width="2.6" paint-order="stroke" stroke-linejoin="round" textLength="44" lengthAdjust="spacingAndGlyphs">413,752</text><text x="1135.9" y="170.2" text-anchor="middle" font-size="11" font-weight="bold" fill="#fff" stroke="#000" stroke-width="2.2" paint-order="stroke" stroke-linejoin="round" textLength="44" lengthAdjust="spacingAndGlyphs">389,068</text><text x="0" y="0" transform="translate(516.28 310.5) rotate(-45)" text-anchor="end" font-size="11" fill="#6a6a6a">01/2016</text><text x="0" y="0" transform="translate(543.64 310.5) rotate(-45)" text-anchor="end" font-size="11" fill="#6a6a6a">02/2016</text><text x="0" y="0" transform="translate(571 310.5) rotate(-45)" text-anchor="end" font-size="11" fill="#6a6a6a">03/2016</text><text x="0" y="0" transform="translate(598.36 310.5) rotate(-45)" text-anchor="end" font-size="11" fill="#6a6a6a">04/2016</text><text x="0" y="0" transform="translate(625.72 310.5) rotate(-45)" text-anchor="end" font-size="11" fill="#6a6a6a">05/2016</text><text x="0" y="0" transform="translate(653.08 310.5) rotate(-45)" text-anchor="end" font-size="11" fill="#6a6a6a">06/2016</text><text x="0" y="0" transform="translate(680.44 310.5) rotate(-45)" text-anchor="end" font-size="11" fill="#6a6a6a">07/2016</text><text x="0" y="0" transform="translate(707.8 310.5) rotate(-45)" text-anchor="end" font-size="11" fill="#6a6a6a">08/2016</text><text x="0" y="0" transform="translate(735.16 310.5) rotate(-45)" text-anchor="end" font-size="11" fill="#6a6a6a">09/2016</text><text x="0" y="0" transform="translate(762.52 310.5) rotate(-45)" text-anchor="end" font-size="11" fill="#6a6a6a">10/2016</text><text x="0" y="0" transform="translate(789.88 310.5) rotate(-45)" text-anchor="end" font-size="11" fill="#6a6a6a">11/2016</text><text x="0" y="0" transform="translate(817.24 310.5) rotate(-45)" text-anchor="end" font-size="11" fill="#6a6a6a">12/2016</text><text x="0" y="0" transform="translate(844.6 310.5) rotate(-45)" text-anchor="end" font-size="11" fill="#6a6a6a">01/2017</text><text x="0" y="0" transform="translate(871.96 310.5) rotate(-45)" text-anchor="end" font-size="11" fill="#6a6a6a">02/2017</text><text x="0" y="0" transform="translate(899.32 310.5) rotate(-45)" text-anchor="end" font-size="11" fill="#6a6a6a">03/2017</text><text x="0" y="0" transform="translate(926.68 310.5) rotate(-45)" text-anchor="end" font-size="11" fill="#6a6a6a">04/2017</text><text x="0" y="0" transform="translate(954.04 310.5) rotate(-45)" text-anchor="end" font-size="11" fill="#6a6a6a">05/2017</text><text x="0" y="0" transform="translate(981.4 310.5) rotate(-45)" text-anchor="end" font-size="11" fill="#6a6a6a">06/2017</text><text x="0" y="0" transform="translate(1008.76 310.5) rotate(-45)" text-anchor="end" font-size="11" fill="#6a6a6a">07/2017</text><text x="0" y="0" transform="translate(1036.12 310.5) rotate(-45)" text-anchor="end" font-size="11" fill="#6a6a6a">08/2017</text><text x="0" y="0" transform="translate(1063.48 310.5) rotate(-45)" text-anchor="end" font-size="11" fill="#6a6a6a">09/2017</text><text x="0" y="0" transform="translate(1090.84 310.5) rotate(-45)" text-anchor="end" font-size="11" fill="#6a6a6a">10/2017</text><text x="0" y="0" transform="translate(1118.2 310.5) rotate(-45)" text-anchor="end" font-size="11" fill="#6a6a6a">11/2017</text><text x="0" y="0" transform="translate(1145.56 310.5) rotate(-45)" text-anchor="end" font-size="11" fill="#6a6a6a">12/2017</text><text x="828.4" y="360.9" text-anchor="middle" font-size="12.5" fill="#5a5a5a" textLength="64" lengthAdjust="spacing">Month/Year</text><circle cx="1184.1" cy="231.9" r="6.2" fill="#007b00"/><text x="1198.4" y="236.9" font-size="12" font-weight="bold" fill="#000" textLength="52.5" lengthAdjust="spacingAndGlyphs">Quantity</text><line x1="1176.1" x2="1192.1" y1="248.8" y2="248.8" stroke="#7db3ea" stroke-width="2.4"/><circle cx="1184.1" cy="248.8" r="3.9" fill="#7db3ea"/><text x="1198.4" y="252.8" font-size="12" font-weight="bold" fill="#000">Avg</text></svg></body></html>
